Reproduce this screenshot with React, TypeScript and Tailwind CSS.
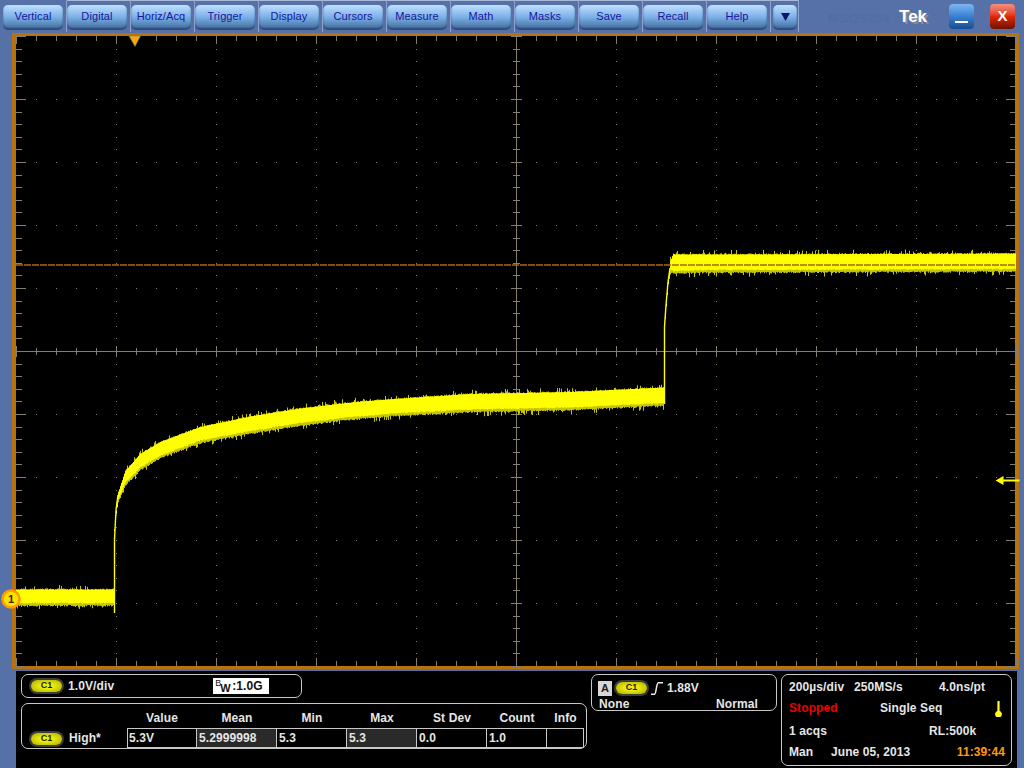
const font = 'font-["Liberation_Sans",Arial,sans-serif]';

const menus = ['Vertical', 'Digital', 'Horiz/Acq', 'Trigger', 'Display', 'Cursors', 'Measure', 'Math', 'Masks', 'Save', 'Recall', 'Help'];

const btn =
  'h-[25px] rounded-[5px] bg-gradient-to-b from-[#bfe0ff] via-[#7aaee6] to-[#3d6796] shadow-[inset_0_-2px_2px_rgba(30,50,90,0.6)] flex items-center justify-center pb-[2px]';

function range(from: number, to: number, step: number) {
  const out: number[] = [];
  for (let v = from; v <= to + 0.01; v += step) out.push(Math.round(v));
  return out;
}

// graticule in page coordinates, the svg viewBox starts at 16,36
function graticule() {
  const xsMinor = range(16, 1016, 20);
  const ysMinor = range(36, 666, 12.6);
  const isMajorX = (x: number) => (x - 16) % 100 === 0;
  const isMajorY = (y: number) => Math.abs(((y - 36) / 63) - Math.round((y - 36) / 63)) < 0.05;
  let d = '';
  let dots = '';
  for (const x of xsMinor) {
    const top = isMajorX(x) ? 8 : 5;
    d += `M${x + 0.5} 36v${top}M${x + 0.5} 666v-${top}`;
    const t = isMajorX(x) ? 5 : 3;
    d += `M${x + 0.5} ${351 - t}v${t * 2 + 1}`;
    if (isMajorX(x) && x !== 16 && x !== 1016 && x !== 516) {
      for (const y of ysMinor) dots += `M${x} ${y}h1v1h-1z`;
    }
  }
  for (const y of ysMinor) {
    const len = isMajorY(y) ? 10 : 6;
    d += `M16 ${y + 0.5}h${len}M1016 ${y + 0.5}h-${len}`;
    const t = isMajorY(y) ? 5 : 3;
    d += `M${516 - t} ${y + 0.5}h${t * 2 + 1}`;
    if (isMajorY(y) && y !== 36 && y < 660 && y !== 351) {
      for (const x of xsMinor) dots += `M${x} ${y}h1v1h-1z`;
    }
  }
  return { d, dots };
}

const curve: [number, number, number][] = [
  [16, 597.5, 7.5],
  [113, 597.5, 7.5],
  [114, 530, 1],
  [116, 512, 1.5],
  [118, 497, 4],
  [125, 478, 6.5],
  [140, 462, 7.5],
  [160, 450, 7.5],
  [200, 435, 7.5],
  [250, 425, 8],
  [300, 417, 8],
  [350, 411, 8],
  [400, 407, 8],
  [470, 403, 8.5],
  [570, 401, 8.5],
  [663, 396.5, 8.5],
  [664, 330, 1],
  [666, 305, 1.2],
  [668, 282, 2],
  [670, 266, 5],
  [673, 264, 9],
  [700, 263.5, 8.5],
  [1016, 262.5, 8.5],
];

function at(x: number) {
  for (let i = 1; i < curve.length; i++) {
    const a = curve[i - 1];
    const b = curve[i];
    if (x <= b[0]) {
      const t = (x - a[0]) / (b[0] - a[0]);
      return [a[1] + (b[1] - a[1]) * t, a[2] + (b[2] - a[2]) * t];
    }
  }
  return [curve[curve.length - 1][1], curve[curve.length - 1][2]];
}

function trace() {
  let seed = 12345;
  const rnd = () => {
    seed = (seed * 1103515245 + 12345) & 0x7fffffff;
    return seed / 0x7fffffff;
  };
  let core = '';
  let edge = '';
  for (let x = 16; x < 1016; x++) {
    const [c, h] = at(x);
    const up = rnd() > 0.8 ? rnd() * 5 : rnd() * 1.5;
    const down = rnd() > 0.8 ? rnd() * 5 : rnd() * 1.5;
    const top = c - h - (h > 3 ? up : 0);
    const bottom = c + h + (h > 3 ? down : 0);
    edge += `M${x} ${top.toFixed(1)}V${bottom.toFixed(1)}H${x + 1}V${top.toFixed(1)}z`;
    const inset = h > 3 ? 1.5 + rnd() : 0;
    const t2 = c - h - inset * 0.2;
    const b2 = c + h - inset;
    core += `M${x} ${t2.toFixed(1)}V${b2.toFixed(1)}H${x + 1}V${t2.toFixed(1)}z`;
  }
  return { core, edge };
}

const grid = graticule();
const wave = trace();

function Scope() {
  return (
    <svg viewBox="16 36 999 630" className="block w-[999px] h-[630px] overflow-visible bg-black">
      <path d={grid.d} stroke="#857e6e" strokeWidth="1" fill="none" />
      <path d={grid.dots} fill="#857e6e" />
      <path d="M16 351.5H1016M516.5 36V666" stroke="#857e6e" strokeWidth="1" fill="none" />
      <path d={wave.edge} fill="#c4c400" />
      <path d={wave.core} fill="#ffff00" />
      <path d="M114.5 613V540L116 510L118 495M664.5 404V327L666 305L668 282L670 268" stroke="#ffff00" strokeWidth="1.4" fill="none" />
      <path d="M16 265H1016" stroke="#a8680e" strokeWidth="1.4" strokeDasharray="7 1" fill="none" />
      <path d="M129 36h11.5l-5.5 10.5z" fill="#ffa313" stroke="#2f9a5a" strokeWidth="0.5" />
      <path d="M995.5 480.5l8-4.5v3.5h16v2h-16v3.5z" fill="#ffff00" />
      <circle cx="11" cy="599" r="8.5" fill="#ffe100" stroke="#ff9a00" strokeWidth="2.5" />
      <text x="11" y="603" textAnchor="middle" fontSize="11" fontWeight="700" fontFamily="Liberation Sans, sans-serif" fill="#332a00">
        1
      </text>
    </svg>
  );
}

function Pill() {
  return (
    <span className="w-[31px] h-[12px] rounded-full bg-[radial-gradient(ellipse_at_center,#ecec10_30%,#a8a800_100%)] shadow-[0_0_0_2px_#3c3c3c] flex items-center justify-center text-[9px] font-bold text-[#1c1c00] tracking-normal shrink-0">
      C1
    </span>
  );
}

const cols = [
  { head: 'Value', val: '5.3V', w: 'w-[70px]' },
  { head: 'Mean', val: '5.2999998', w: 'w-[80px]', dark: true },
  { head: 'Min', val: '5.3', w: 'w-[70px]' },
  { head: 'Max', val: '5.3', w: 'w-[70px]', dark: true },
  { head: 'St Dev', val: '0.0', w: 'w-[70px]' },
  { head: 'Count', val: '1.0', w: 'w-[60px]' },
  { head: 'Info', val: '', w: 'w-[37px]' },
];

function Measurements() {
  return (
    <div className="w-[566px] h-[46px] mt-[5px] border border-[#c8c8c8] rounded-[7px] flex">
      <div className="w-[105px] shrink-0 flex items-end pl-[9px] pb-[3px] gap-[7px]">
        <Pill />
        <span className="leading-[13px]">High*</span>
      </div>
      {cols.map((c, i) => (
        <div key={c.head} className={`${c.w} shrink-0 flex flex-col`}>
          <div className="h-[25px] flex items-center justify-center pt-[4px]">{c.head}</div>
          <div
            className={`h-[20px] border-t border-b border-r border-[#c8c8c8] flex items-center ${i === 0 ? 'border-l pl-[1px]' : 'pl-[2px]'} ${c.dark ? 'bg-[#2a2a2a]' : ''}`}
          >
            {c.val}
          </div>
        </div>
      ))}
    </div>
  );
}

function Readouts() {
  return (
    <div className="shrink-0 flex gap-[4px] items-start">
      <div className="w-[186px] h-[37px] border border-[#c8c8c8] rounded-[7px] px-[6px] pt-[6px]">
        <div className="flex items-center h-[14px]">
          <span className="w-[14px] h-[15px] bg-[#d8d8d8] text-[#222] flex items-center justify-center text-[11px]">A</span>
          <span className="ml-[4px]">
            <Pill />
          </span>
          <svg width="12" height="13" viewBox="0 0 12 13" className="ml-[4px]" fill="none" stroke="#eee" strokeWidth="1.5">
            <path d="M0 12.3h3.5c2 0 1.5-11.6 4-11.6H12" />
          </svg>
          <span className="ml-[4px]">1.88V</span>
        </div>
        <div className="flex justify-between mt-[3px] h-[13px] leading-[13px] pl-[1px] pr-[12px]">
          <span>None</span>
          <span>Normal</span>
        </div>
      </div>
      <div className="w-[231px] h-[92px] border border-[#c8c8c8] rounded-[7px] pl-[7px] pr-[6px] pt-[6px] flex flex-col gap-[8px] leading-[13px]">
        <div className="flex">
          <span className="w-[65px]">200µs/div</span>
          <span className="w-[85px]">250MS/s</span>
          <span>4.0ns/pt</span>
        </div>
        <div className="flex">
          <span className="w-[91px] text-[#ee0000]">Stopped</span>
          <span className="w-[115px]">Single Seq</span>
          <svg width="7" height="16" viewBox="0 0 7 16" className="shrink-0 -mt-[1px]">
            <path d="M2.4 0h2.2v10a3.4 3.4 0 1 1-2.2 0z" fill="#ffff22" />
          </svg>
        </div>
        <div className="flex">
          <span className="w-[140px]">1 acqs</span>
          <span>RL:500k</span>
        </div>
        <div className="flex">
          <span className="w-[42px]">Man</span>
          <span className="w-[126px]">June 05, 2013</span>
          <span className="text-[#ff9a0a]">11:39:44</span>
        </div>
      </div>
    </div>
  );
}

export default function App() {
  return (
    <div className={`${font} w-[1024px] h-[768px] bg-[#5670a8] flex flex-col overflow-hidden`}>
      <div className="h-[33px] shrink-0 flex items-start pt-[4px] pl-[3px] relative">
        {menus.map((m) => (
          <div key={m} className="w-[64px] shrink-0 -mt-[4px] pt-[4px] h-[32px] border-r border-t border-r-[#8ea3cc] border-t-[#a9b8d6] first:border-t-transparent">
            <div className={`${btn} w-[60px] text-[11px] tracking-[0.1px] text-[#16169a]`}>{m}</div>
          </div>
        ))}
        <div className="w-[28px] shrink-0 -mt-[4px] pt-[4px] pl-[2px] h-[32px] border-r border-t border-r-[#8ea3cc] border-t-[#a9b8d6]">
          <div className={`${btn} w-[24px] rounded-[3px]`}>
            <svg width="9" height="9" viewBox="0 0 9 9">
              <path d="M0 1h9L4.5 9z" fill="#11116e" />
            </svg>
          </div>
        </div>
        <span className="ml-[29px] mt-[5px] text-[13px] font-bold text-[#526ca4] tracking-[0.5px]">MSO5204</span>
        <span className="ml-[9px] mt-[1px] text-[17px] leading-[24px] font-bold text-white [text-shadow:2px_2px_0_#8a8a94]">Tek</span>
        <div className="w-[25px] h-[25px] ml-[22px] rounded-[4px] bg-gradient-to-b from-[#7ab6f2] via-[#3a80d0] to-[#1a4c90] flex items-end justify-center pb-[6px]">
          <span className="w-[13px] h-[2px] bg-white" />
        </div>
        <div className="w-[25px] h-[25px] ml-[16px] rounded-[4px] bg-gradient-to-b from-[#f09080] via-[#e02808] to-[#701000] flex items-center justify-center text-[15px] font-bold text-white">
          X
        </div>
      </div>

      <div className="ml-[12px] mr-[5px] border-x-[4px] border-y-[3px] border-[#b8720e] shrink-0">
        <Scope />
      </div>

      <div className="ml-[16px] mr-[7px] mt-[2px] flex-1 bg-black text-[12px] tracking-[0.1px] font-bold text-[#e6e6e6] flex pt-[3px] pl-[5px] gap-[4px]">
        <div className="w-[566px] shrink-0">
          <div className="w-[281px] h-[24px] border border-[#c8c8c8] rounded-[7px] flex items-center pl-[9px]">
            <Pill />
            <span className="ml-[6px]">1.0V/div</span>
            <span className="ml-[99px] w-[56px] h-[16px] bg-white text-[#111] flex items-center relative pl-[13px] text-[12px]">
              <span className="absolute left-[2px] -top-[1px] text-[9px] font-normal">B</span>
              <span className="absolute left-[7px] top-[2px] text-[11px]">W</span>
              <span className="ml-[6px]">:1.0G</span>
            </span>
          </div>
          <Measurements />
        </div>
        <Readouts />
      </div>
    </div>
  );
}
